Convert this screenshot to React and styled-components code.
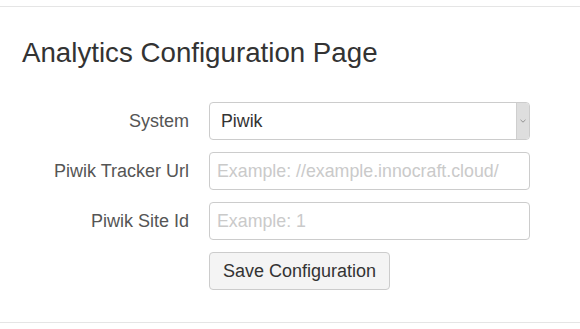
import React, { useState } from "react";
import styled, { createGlobalStyle } from "styled-components";

const GlobalStyle = createGlobalStyle`
  body {
    margin: 0;
    background: #fff;
    font-family: "Liberation Sans", Arial, sans-serif;
    color: #333;
  }
`;

function App() {
  const [system, setSystem] = useState("piwik");
  const [trackerUrl, setTrackerUrl] = useState("");
  const [siteId, setSiteId] = useState("");

  return (
    <>
      <GlobalStyle />
      <Panel>
        <Title>Analytics Configuration Page</Title>
        <Form onSubmit={(e) => e.preventDefault()}>
          <Row>
            <Label htmlFor="system">System</Label>
            <SelectWrap>
              <Select
                id="system"
                value={system}
                onChange={(e) => setSystem(e.target.value)}
              >
                <option value="piwik">Piwik</option>
                <option value="google">Google Analytics</option>
              </Select>
              <Arrow>
                <svg width="6" height="4" viewBox="0 0 6 4">
                  <path
                    d="M0.5 0.8 L3 3.2 L5.5 0.8"
                    fill="none"
                    stroke="#8a8a8a"
                    strokeWidth="0.9"
                  />
                </svg>
              </Arrow>
            </SelectWrap>
          </Row>
          <Row>
            <Label htmlFor="trackerUrl">Piwik Tracker Url</Label>
            <Input
              id="trackerUrl"
              placeholder="Example: //example.innocraft.cloud/"
              value={trackerUrl}
              onChange={(e) => setTrackerUrl(e.target.value)}
            />
          </Row>
          <Row>
            <Label htmlFor="siteId">Piwik Site Id</Label>
            <Input
              id="siteId"
              placeholder="Example: 1"
              value={siteId}
              onChange={(e) => setSiteId(e.target.value)}
            />
          </Row>
          <Row>
            <Spacer />
            <Button type="submit">Save Configuration</Button>
          </Row>
        </Form>
      </Panel>
    </>
  );
}

export default App;

const Panel = styled.div`
  margin-top: 6px;
  border-top: 1px solid #e5e5e5;
  border-bottom: 1px solid #e5e5e5;
  padding: 0 0 32px 22px;
`;

const Title = styled.h1`
  margin: 30px 0 34px;
  font-size: 27.7px;
  line-height: 31px;
  font-weight: 400;
  color: #333;
`;

const Form = styled.form`
  display: flex;
  flex-direction: column;
  gap: 12px;
`;

const Row = styled.div`
  display: flex;
  align-items: center;
  gap: 20px;
`;

const Label = styled.label`
  width: 167px;
  text-align: right;
  font-size: 18px;
  color: #555;
`;

const Spacer = styled.div`
  width: 167px;
`;

const fieldBase = `
  box-sizing: border-box;
  width: 321px;
  height: 38px;
  padding: 6px 7px;
  border: 1px solid #ccc;
  border-radius: 4px;
  background: #fff;
  font-family: "Liberation Sans", Arial, sans-serif;
  font-size: 17.8px;
  color: #333;
  outline: none;
`;

const Input = styled.input`
  ${fieldBase}
  &::placeholder {
    color: #cacaca;
  }
`;

const SelectWrap = styled.div`
  position: relative;
  width: 321px;
  height: 38px;
`;

const Select = styled.select`
  ${fieldBase}
  padding-left: 11px;
  appearance: none;
  -webkit-appearance: none;
`;

const Arrow = styled.span`
  position: absolute;
  top: 1px;
  right: 1px;
  bottom: 1px;
  width: 12px;
  display: flex;
  align-items: center;
  justify-content: center;
  background: #dedede;
  border-left: 1px solid #cfcfcf;
  border-radius: 0 3px 3px 0;
  pointer-events: none;
`;

const Button = styled.button`
  box-sizing: border-box;
  height: 38px;
  padding: 6px 13px;
  border: 1px solid #ccc;
  border-radius: 4px;
  background: #f4f4f4;
  font-family: "Liberation Sans", Arial, sans-serif;
  font-size: 18px;
  color: #333;
  cursor: pointer;
`;
